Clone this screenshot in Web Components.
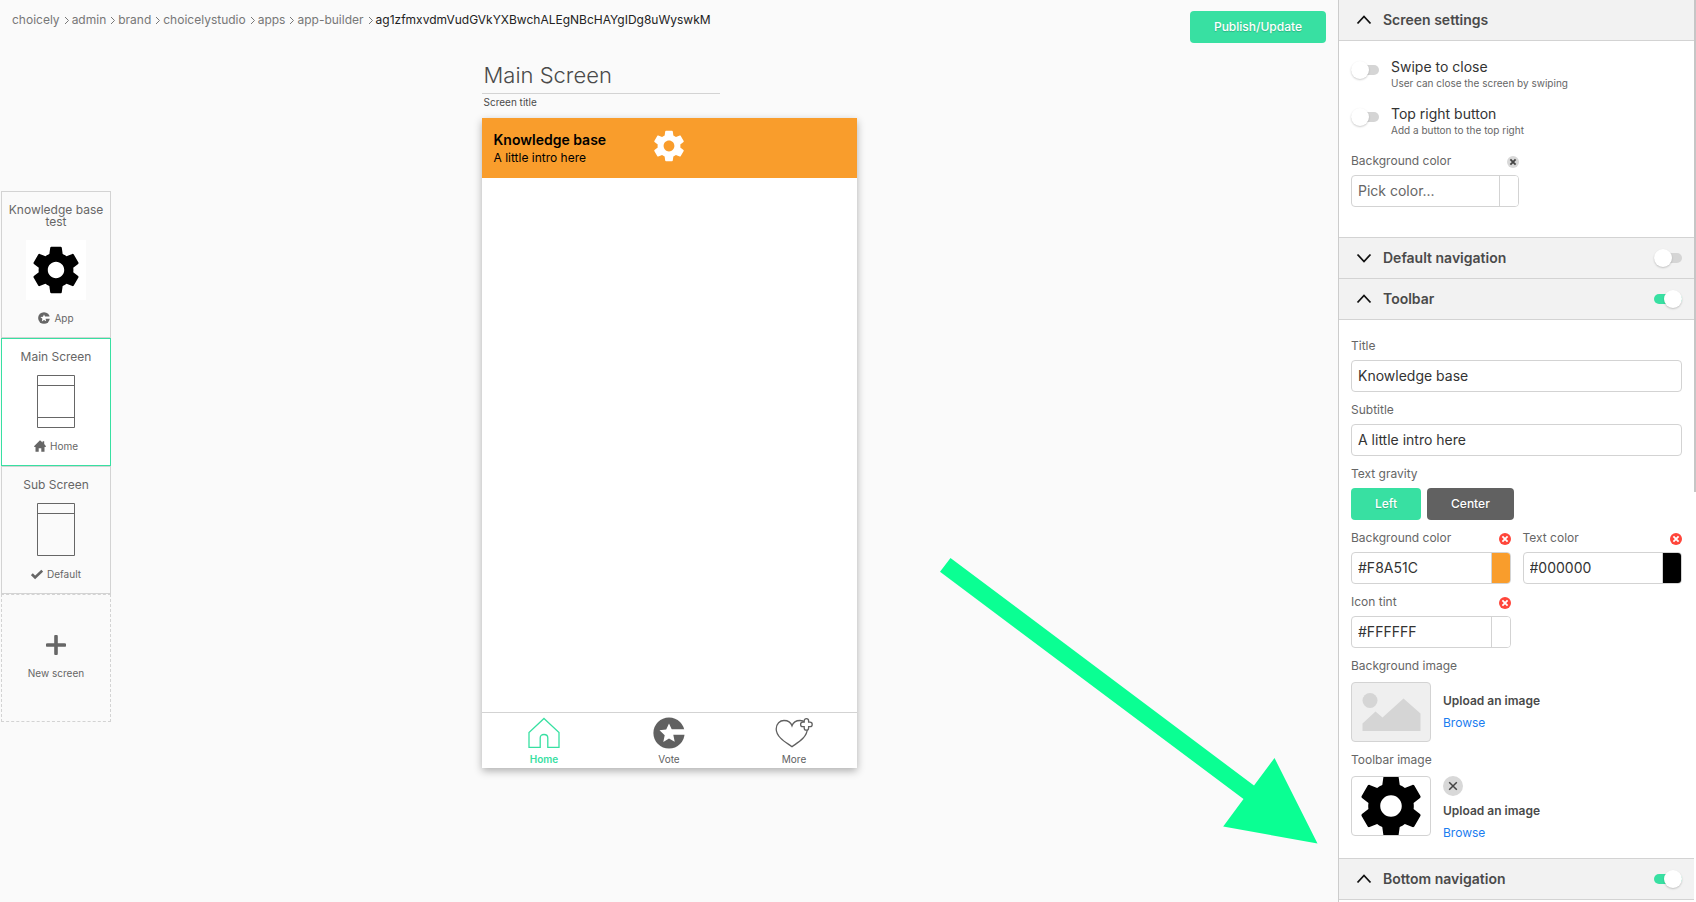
<!DOCTYPE html>
<html lang="en">
<head>
<meta charset="utf-8">
<title>App builder</title>
<style>
  body {
    margin: 0;
    background: #fafafa;
    color: #4a4a4a;
    font-family: Inter, "Liberation Sans", sans-serif;
    font-size: 12px;
    line-height: 20px;
    --green: #38e0a2;
    --line: #d3d3d3;
    --muted: #666;
  }
</style>
</head>
<body>
<app-builder>
  <screen-rail slot="rail">
    <screen-card heading="Knowledge base test" picture="gear" badge="logo" label="App"></screen-card>
    <screen-card heading="Main Screen" picture="screen-full" badge="house" label="Home" selected></screen-card>
    <screen-card heading="Sub Screen" picture="screen-top" badge="check" label="Default"></screen-card>
    <new-screen-card></new-screen-card>
  </screen-rail>

  <bread-crumbs slot="top" path="choicely/admin/brand/choicelystudio/apps/app-builder/ag1zfmxvdmVudGVkYXBwchALEgNBcHAYgIDg8uWyswkM"></bread-crumbs>
  <action-button slot="top">Publish/Update</action-button>

  <screen-preview>
    <nav-item icon="home" active>Home</nav-item>
    <nav-item icon="logo">Vote</nav-item>
    <nav-item icon="heart">More</nav-item>
  </screen-preview>

  <settings-panel slot="panel">
    <settings-section heading="Screen settings" open roomy>
      <toggle-row heading="Swipe to close" hint="User can close the screen by swiping"></toggle-row>
      <toggle-row heading="Top right button" hint="Add a button to the top right"></toggle-row>
      <color-field label="Background color" placeholder="Pick color..." single></color-field>
    </settings-section>
    <settings-section heading="Default navigation" toggle="off"></settings-section>
    <settings-section heading="Toolbar" toggle="on" open>
      <text-field label="Title" value="Knowledge base"></text-field>
      <text-field label="Subtitle" value="A little intro here"></text-field>
      <button-field label="Text gravity">
        <action-button>Left</action-button>
        <action-button dark>Center</action-button>
      </button-field>
      <field-pair>
        <color-field label="Background color" value="#F8A51C" color="#f99d2c"></color-field>
        <color-field label="Text color" value="#000000" color="#000"></color-field>
        <color-field label="Icon tint" value="#FFFFFF" color="#fff"></color-field>
      </field-pair>
      <image-field label="Background image"></image-field>
      <image-field label="Toolbar image" filled></image-field>
    </settings-section>
    <settings-section heading="Bottom navigation" toggle="on" open></settings-section>
  </settings-panel>
</app-builder>

<script>
const ICONS = {
  gear: ['0 0 24 24', '<path fill="currentColor" d="M19.14 12.94c.04-.3.06-.61.06-.94 0-.32-.02-.64-.07-.94l2.03-1.58c.18-.14.23-.41.12-.61l-1.92-3.32c-.12-.22-.37-.29-.59-.22l-2.39.96c-.5-.38-1.03-.7-1.62-.94l-.36-2.54c-.04-.24-.24-.41-.48-.41h-3.84c-.24 0-.43.17-.47.41l-.36 2.54c-.59.24-1.13.57-1.62.94l-2.39-.96c-.22-.08-.47 0-.59.22L2.74 8.87c-.12.21-.08.47.12.61l2.03 1.58c-.05.3-.09.63-.09.94s.02.64.07.94l-2.03 1.58c-.18.14-.23.41-.12.61l1.92 3.32c.12.22.37.29.59.22l2.39-.96c.5.38 1.03.7 1.62.94l.36 2.54c.05.24.24.41.48.41h3.84c.24 0 .44-.17.47-.41l.36-2.54c.59-.24 1.13-.56 1.62-.94l2.39.96c.22.08.47 0 .59-.22l1.92-3.32c.12-.22.07-.47-.12-.61l-2.01-1.58zM12 15.4c-1.88 0-3.4-1.52-3.4-3.4s1.52-3.4 3.4-3.4 3.4 1.52 3.4 3.4-1.52 3.4-3.4 3.4z"/>'],
  logo: ['0 0 32 32', '<circle cx="16" cy="16" r="15.6" fill="currentColor"/><path fill="#fff" d="M16 6.6l2.7 5.7H32v5.5H20.3l1.4 7L16 21.6 10.3 25l1.4-6.7-5.2-5 6.7-.9z"/>'],
  house: ['0 0 12 12', '<path fill="currentColor" d="M6 .2L8.6 2.6V1.3h1.6V4L12 6.2l-.5.8h-1v4.8H7.3V8.200H4.700v3.600H1.500V7H.500L0 6.200z"/>'],
  check: ['0 0 12 12', '<path d="M.900 6.200l3.200 3.200L11.200 2.600" fill="none" stroke="currentColor" stroke-width="2.600"/>'],
  plus: ['0 0 20 20', '<path d="M10 1.500v17M1.500 10h17" stroke="currentColor" stroke-width="3.600" stroke-linecap="round"/>'],
  home: ['0 0 32 32', '<path d="M16 1.500L31 15.500V30.300H19.800V21q0-3.500-3.800-3.500T12.200 21v9.300H1V15.500z" fill="none" stroke="currentColor" stroke-width="1.300"/>'],
  heart: ['0 0 38 32', '<g fill="#fff" stroke="currentColor" stroke-width="1.300"><path d="M17 29.700C12 26 1.200 20.500 1.200 12C1.200 6.500 5 3.500 9 3.500c4 0 7 2.300 8 5.200C18 5.800 21 3.500 25 3.500c4 0 7.300 3 7.300 8.500C32.300 20.500 22 26 17 29.700z"/><path d="M29.200 5.200V3.800a2.200 2.200 0 0 1 4.400 0v1.400h1.400a2.200 2.200 0 0 1 0 4.400h-1.400V11a2.200 2.200 0 0 1-4.400 0V9.600h-1.400a2.200 2.200 0 0 1 0-4.400z"/></g>'],
  up: ['0 0 16 16', '<path d="M1.500 11.500L8 4.500l6.500 7" fill="none" stroke="#111" stroke-width="1.800"/>'],
  down: ['0 0 16 16', '<path d="M1.500 4.500L8 11.500l6.500-7" fill="none" stroke="#111" stroke-width="1.800"/>'],
  next: ['0 0 8 12', '<path d="M2 3l3.500 3.500L2 10" fill="none" stroke="currentColor"/>'],
  'screen-full': ['0 0 38 53', '<g fill="none" stroke="currentColor"><path d="M.5.5h37v52H.5z"/><path d="M1 10.500h36M1 42.500h36"/></g>'],
  'screen-top': ['0 0 38 53', '<g fill="none" stroke="currentColor"><path d="M.5.5h37v52H.5z"/><path d="M1 10.500h36"/></g>'],
  picture: ['0 0 80 60', '<g fill="#d5d5d5"><circle cx="19" cy="18.500" r="7.500"/><path d="M11.500 41.500L24.500 29.500l7 6L52.500 16.500l17 15V49H11.500z"/></g>'],
  cross: ['0 0 12 12', '<path d="M3.400 3.400l5.200 5.200M8.600 3.400L3.400 8.600" stroke="currentColor" stroke-width="1.800"/>'],
  close: ['0 0 20 20', '<path d="M6.200 6.200l7.600 7.600M13.800 6.200l-7.600 7.600" stroke="currentColor" stroke-width="1.500"/>']
}

function icon (name, width, height = width) {
  const [box, shape] = ICONS[name]
  return `<svg viewBox="${box}" width="${width}" height="${height}" aria-hidden="true">${shape}</svg>`
}

const BASE_STYLE = `
  * { box-sizing: border-box; }
  :host { box-sizing: border-box; }
  svg { display: block; flex: none; }
  button, input { font: inherit; margin: 0; }
  button { padding: 0; border: 0; background: none; cursor: pointer; }
`

/** Registers an element whose shadow DOM is rendered once from its attributes. */
function define (name, render) {
  window.customElements.define(name, class extends HTMLElement {
    constructor () {
      super()
      this.attachShadow({ mode: 'open' })
    }

    connectedCallback () {
      const template = document.createElement('template')
      template.innerHTML = render(this)
        .replace('<style>', '<style>' + BASE_STYLE)
      this.shadowRoot.replaceChildren(template.content.cloneNode(true))
    }
  })
}

const FIELD_STYLE = `
  :host { display: block; min-width: 0; }
  .label { display: flex; align-items: center; justify-content: space-between; height: 20px; margin-bottom: 4px; color: var(--muted); }
  .box { display: flex; width: 100%; height: 32px; border: 1px solid var(--line); border-radius: 4px; background: #fff; overflow: hidden; }
  input { flex: 1; min-width: 0; width: 100%; padding: 0 6px; border: 0; outline: 0; background: none; color: #333; font-size: 14px; }
  input::placeholder { color: #666; opacity: 1; }
`

define('app-builder', () => `
  <style>
    :host { display: grid; grid-template-columns: 112px minmax(0, 1fr) 358px; height: 100vh; overflow: hidden; }
    main { position: relative; display: flex; flex-direction: column; margin-left: -112px; }
    header { display: flex; justify-content: space-between; align-items: flex-start; padding: 11px 12px 0; }
    .arrow { position: absolute; right: 20px; bottom: 58px; pointer-events: none; }
    ::slotted([slot=rail]) { z-index: 1; }
  </style>
  <slot name="rail"></slot>
  <main>
    <header><slot name="top"></slot></header>
    <slot></slot>
    <svg class="arrow" width="378" height="286" viewBox="0 0 378 286" aria-hidden="true">
      <path fill="#0aff93" d="M10.500 0L314 227.500 334.500 200 377.500 285.500 283.200 268.500 303.500 241 0 13.800z"/>
    </svg>
  </main>
  <slot name="panel"></slot>
`)

define('bread-crumbs', el => {
  const parts = el.getAttribute('path').split('/')
  const last = parts.pop()
  return `
    <style>
      :host { display: block; }
      nav { display: flex; align-items: center; height: 18px; color: #777; }
      a { color: inherit; text-decoration: none; }
      svg { margin: 0 1px 0 3px; }
      span { color: #222; }
    </style>
    <nav aria-label="Breadcrumb">
      ${parts.map(part => `<a href="#${part}">${part}</a>${icon('next', 8, 12)}`).join('')}
      <span aria-current="page">${last}</span>
    </nav>`
})

define('action-button', el => `
  <style>
    :host { display: inline-block; }
    button { height: 32px; padding: 0 24px; border-radius: 4px; background: var(--green); color: #fff; font-weight: 500; text-shadow: 0 1px 1px rgba(0, 0, 0, .2); }
    :host([dark]) button { background: #616161; }
  </style>
  <button type="button"><slot></slot></button>
`)

define('screen-rail', () => `
  <style>
    :host { display: flex; flex-direction: column; justify-content: center; padding: 10px 1px 0; }
  </style>
  <slot></slot>
`)

const CARD_STYLE = `
  :host { display: block; }
  button { display: flex; flex-direction: column; align-items: center; width: 100%; min-height: 128px; padding: 12px 4px 11px; border: 1px solid var(--line); color: var(--muted); line-height: 12px; }
  .label { display: flex; align-items: center; gap: 4px; height: 16px; font-size: 10px; }
`

define('screen-card', el => {
  const picture = el.getAttribute('picture')
  return `
    <style>
      ${CARD_STYLE}
      :host([selected]) button { border-color: var(--green); background: #fff; }
      .picture { margin: 12px 0 10px; }
      .app { display: grid; place-items: center; width: 60px; height: 60px; background: #fff; color: #000; }
    </style>
    <button type="button">
      <span>${el.getAttribute('heading')}</span>
      <span class="picture ${picture === 'gear' ? 'app' : ''}">${picture === 'gear' ? icon(picture, 58) : icon(picture, 38, 53)}</span>
      <span class="label">${icon(el.getAttribute('badge'), 12)}${el.getAttribute('label')}</span>
    </button>`
})

define('new-screen-card', () => `
  <style>
    ${CARD_STYLE}
    button { justify-content: center; gap: 10px; border-style: dashed; }
  </style>
  <button type="button">${icon('plus', 20)}<span class="label">New screen</span></button>
`)

define('screen-preview', () => `
  <style>
    :host { display: block; width: 375px; margin: 16px auto 0; }
    .name { display: block; width: 238px; height: 35px; padding: 0 2px 3px; border: 0; border-bottom: 1px solid var(--line); outline: 0; background: none; color: #4a4a4a; font-size: 22px; font-weight: 300; }
    label { display: block; padding: 0 2px; font-size: 10px; line-height: 16px; }
    .phone { display: flex; flex-direction: column; aspect-ratio: 375 / 650; margin-top: 8px; background: #fff; box-shadow: 0 3px 8px rgba(0, 0, 0, .3); }
    .bar { display: grid; grid-template-columns: 1fr auto 1fr; align-items: center; height: 60px; padding: 0 12px 4px; background: #f99d2c; color: #000; line-height: 18px; }
    .titles { padding-top: 6px; }
    .bar svg { color: #fff; }
    strong { display: block; font-size: 14px; font-weight: 600; }
    nav { display: grid; grid-template-columns: repeat(3, 1fr); margin-top: auto; border-top: 1px solid var(--line); }
  </style>
  <input class="name" id="name" value="Main Screen">
  <label for="name">Screen title</label>
  <div class="phone">
    <div class="bar">
      <div class="titles"><strong>Knowledge base</strong>A little intro here</div>
      ${icon('gear', 38)}
    </div>
    <nav><slot></slot></nav>
  </div>
`)

define('nav-item', el => `
  <style>
    :host { display: block; }
    a { display: flex; flex-direction: column; align-items: center; gap: 2px; height: 55px; padding-top: 4px; color: #616161; font-size: 10px; line-height: 16px; text-decoration: none; }
    :host([active]) a { color: var(--green); font-weight: 600; }
  </style>
  <a href="#">${icon(el.getAttribute('icon'), el.getAttribute('icon') === 'heart' ? 38 : 32, 32)}<slot></slot></a>
`)

define('settings-panel', () => `
  <style>
    :host { display: block; position: relative; min-height: 100vh; padding-right: 2px; border-left: 1px solid #ccc; background: #fff; }
    .thumb { position: absolute; top: 0; right: 0; width: 2px; height: 492px; background: #c6c6c6; }
  </style>
  <slot></slot>
  <div class="thumb"></div>
`)

define('settings-section', el => {
  const toggle = el.getAttribute('toggle')
  const open = el.hasAttribute('open')
  return `
    <style>
      :host { display: block; }
      header { display: flex; align-items: center; height: 41px; padding: 0 12px 1px 17px; border-bottom: 1px solid var(--line); background: #f2f2f2; }
      button { display: flex; flex: 1; align-items: center; gap: 11px; color: #4a4a4a; font-size: 14px; font-weight: 600; }
      .body { display: grid; grid-template-columns: minmax(0, 1fr); gap: 8px; padding: 16px 12px 14px; border-bottom: 1px solid var(--line); }
      :host([roomy]) .body { gap: 9px; padding-bottom: 30px; }
    </style>
    <header>
      <button type="button" aria-expanded="${open}">${icon(open ? 'up' : 'down', 16)}${el.getAttribute('heading')}</button>
      ${toggle ? `<toggle-switch label="${el.getAttribute('heading')}" ${toggle === 'on' ? 'checked' : ''}></toggle-switch>` : ''}
    </header>
    ${el.children.length ? '<div class="body"><slot></slot></div>' : ''}`
})

define('toggle-switch', el => `
  <style>
    :host { display: flex; flex: none; align-items: center; height: 18px; }
    input { appearance: none; display: flex; align-items: center; width: 28px; height: 10px; border-radius: 5px; background: #d5d5d5; }
    input::before { content: ""; flex: none; width: 18px; height: 18px; border-radius: 50%; background: #fff; box-shadow: 0 1px 2px rgba(0, 0, 0, .2); }
    input:checked { justify-content: flex-end; background: var(--green); }
  </style>
  <input type="checkbox" aria-label="${el.getAttribute('label')}" ${el.hasAttribute('checked') ? 'checked' : ''}>
`)

define('toggle-row', el => `
  <style>
    :host { display: flex; gap: 12px; height: 38px; }
    toggle-switch { margin-top: 4px; }
    strong { display: block; color: #333; font-size: 14px; font-weight: 400; }
    small { display: block; color: var(--muted); font-size: 10px; line-height: 12px; }
  </style>
  <toggle-switch label="${el.getAttribute('heading')}"></toggle-switch>
  <div><strong>${el.getAttribute('heading')}</strong><small>${el.getAttribute('hint')}</small></div>
`)

define('text-field', el => `
  <style>${FIELD_STYLE}</style>
  <label class="label" for="field">${el.getAttribute('label')}</label>
  <div class="box"><input id="field" value="${el.getAttribute('value')}"></div>
`)

define('color-field', el => {
  const value = el.getAttribute('value') || ''
  return `
    <style>
      ${FIELD_STYLE}
      :host([single]) { max-width: 168px; }
      .clear { width: 12px; height: 12px; margin-top: 2px; border-radius: 50%; background: ${value ? '#ff453a' : '#d8d8d8'}; color: ${value ? '#fff' : '#444'}; }
      .swatch { width: 19px; border-left: 1px solid var(--line); background: ${el.getAttribute('color') || '#fff'}; }
    </style>
    <div class="label">
      <label for="field">${el.getAttribute('label')}</label>
      <button class="clear" type="button" aria-label="Clear">${icon('cross', 12)}</button>
    </div>
    <div class="box">
      <input id="field" value="${value}" placeholder="${el.getAttribute('placeholder') || ''}">
      <button class="swatch" type="button" aria-label="Choose color"></button>
    </div>`
})

define('button-field', el => `
  <style>
    ${FIELD_STYLE}
    .buttons { display: flex; gap: 6px; height: 32px; }
  </style>
  <div class="label" id="label">${el.getAttribute('label')}</div>
  <div class="buttons" role="group" aria-labelledby="label"><slot></slot></div>
`)

define('field-pair', () => `
  <style>
    :host { display: grid; grid-template-columns: repeat(2, minmax(0, 1fr)); gap: 8px 12px; }
  </style>
  <slot></slot>
`)

define('image-field', el => {
  const filled = el.hasAttribute('filled')
  return `
    <style>
      ${FIELD_STYLE}
      .label { margin-bottom: 6px; }
      .row { display: flex; gap: 12px; }
      .thumb { display: grid; place-items: center; place-content: center; width: 80px; height: 60px; border: 1px solid var(--line); border-radius: 4px; background: ${filled ? '#fff' : '#efefef'}; color: #000; overflow: hidden; }
      .actions { display: flex; flex-direction: column; align-items: flex-start; justify-content: center; min-height: 60px; line-height: 22px; }
      .remove { width: 20px; height: 20px; margin-bottom: 4px; border-radius: 50%; background: #d8d8d8; color: #444; }
      strong { font-weight: 600; }
      a { color: #1a7df0; text-decoration: none; }
    </style>
    <div class="label">${el.getAttribute('label')}</div>
    <div class="row">
      <div class="thumb">${filled ? icon('gear', 76) : icon('picture', 80, 60)}</div>
      <div class="actions">
        ${filled ? `<button class="remove" type="button" aria-label="Remove image">${icon('close', 20)}</button>` : ''}
        <strong>Upload an image</strong>
        <a href="#">Browse</a>
      </div>
    </div>`
})
</script>
</body>
</html>
